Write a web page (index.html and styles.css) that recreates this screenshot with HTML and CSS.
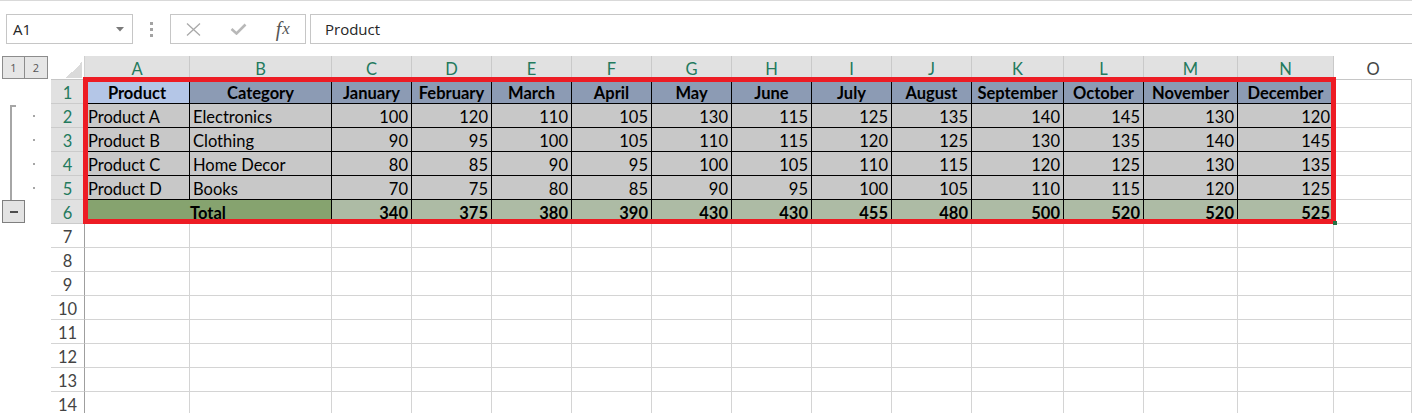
FILE: index.html
```html
<!DOCTYPE html>
<html lang="en">
<head>
<meta charset="utf-8">
<title>Sales sheet</title>
<link rel="stylesheet" href="styles.css">
</head>
<body>
<div class="app">
  <div class="formula-bar">
    <div class="namebox">
      <span class="namebox-text">A1</span>
      <svg class="caret" width="8" height="5" viewBox="0 0 8 5"><path d="M0 0 L8 0 L4 4.5 Z" fill="#7a7a7a"/></svg>
    </div>
    <div class="grip"><span></span><span></span><span></span></div>
    <div class="fx-box">
      <span class="fx-slot">
        <svg width="15" height="13" viewBox="0 0 15 13"><path d="M1 0.5 L14 12.5 M14 0.5 L1 12.5" stroke="#a9a9a9" stroke-width="1.3" fill="none"/></svg>
      </span>
      <span class="fx-slot">
        <svg width="17" height="12" viewBox="0 0 17 12"><path d="M1.5 6 L6.5 10.5 L15.5 1.5" stroke="#b8b8b8" stroke-width="2.6" fill="none"/></svg>
      </span>
      <span class="fx-slot fx-label"><i>f</i><i class="x">x</i></span>
    </div>
    <div class="formula-input">Product</div>
  </div>

  <div class="workspace">
    <div class="gutter">
      <div class="levels"><span class="lvl">1</span><span class="lvl">2</span></div>
      <div class="group">
        <div class="bracket"></div>
        <div class="dots"><span></span><span></span><span></span><span></span></div>
      </div>
      <div class="collapse"><span></span></div>
    </div>

    <div class="grid">
      <!-- header row -->
      <div class="corner"><span class="tri"></span></div>
      <div class="hc">A</div><div class="hc">B</div><div class="hc">C</div><div class="hc">D</div><div class="hc">E</div><div class="hc">F</div><div class="hc">G</div><div class="hc">H</div><div class="hc">I</div><div class="hc">J</div><div class="hc">K</div><div class="hc">L</div><div class="hc">M</div><div class="hc">N</div><div class="hc off">O</div>

      <!-- row 1 -->
      <div class="rh">1</div>
      <div class="t h active">Product</div><div class="t h">Category</div><div class="t h">January</div><div class="t h">February</div><div class="t h">March</div><div class="t h">April</div><div class="t h">May</div><div class="t h">June</div><div class="t h">July</div><div class="t h">August</div><div class="t h">September</div><div class="t h">October</div><div class="t h">November</div><div class="t h">December</div><div class="c"></div>

      <!-- row 2 -->
      <div class="rh">2</div>
      <div class="t">Product A</div><div class="t">Electronics</div><div class="t n">100</div><div class="t n">120</div><div class="t n">110</div><div class="t n">105</div><div class="t n">130</div><div class="t n">115</div><div class="t n">125</div><div class="t n">135</div><div class="t n">140</div><div class="t n">145</div><div class="t n">130</div><div class="t n">120</div><div class="c"></div>

      <!-- row 3 -->
      <div class="rh">3</div>
      <div class="t">Product B</div><div class="t">Clothing</div><div class="t n">90</div><div class="t n">95</div><div class="t n">100</div><div class="t n">105</div><div class="t n">110</div><div class="t n">115</div><div class="t n">120</div><div class="t n">125</div><div class="t n">130</div><div class="t n">135</div><div class="t n">140</div><div class="t n">145</div><div class="c"></div>

      <!-- row 4 -->
      <div class="rh">4</div>
      <div class="t">Product C</div><div class="t">Home Decor</div><div class="t n">80</div><div class="t n">85</div><div class="t n">90</div><div class="t n">95</div><div class="t n">100</div><div class="t n">105</div><div class="t n">110</div><div class="t n">115</div><div class="t n">120</div><div class="t n">125</div><div class="t n">130</div><div class="t n">135</div><div class="c"></div>

      <!-- row 5 -->
      <div class="rh">5</div>
      <div class="t">Product D</div><div class="t">Books</div><div class="t n">70</div><div class="t n">75</div><div class="t n">80</div><div class="t n">85</div><div class="t n">90</div><div class="t n">95</div><div class="t n">100</div><div class="t n">105</div><div class="t n">110</div><div class="t n">115</div><div class="t n">120</div><div class="t n">125</div><div class="c"></div>

      <!-- row 6 -->
      <div class="rh">6</div>
      <div class="t tot">Total</div><div class="t tn">340</div><div class="t tn">375</div><div class="t tn">380</div><div class="t tn">390</div><div class="t tn">430</div><div class="t tn">430</div><div class="t tn">455</div><div class="t tn">480</div><div class="t tn">500</div><div class="t tn">520</div><div class="t tn">520</div><div class="t tn">525</div><div class="c"></div>

      <!-- rows 7-14 -->
      <div class="rh off">7</div><div class="c"></div><div class="c"></div><div class="c"></div><div class="c"></div><div class="c"></div><div class="c"></div><div class="c"></div><div class="c"></div><div class="c"></div><div class="c"></div><div class="c"></div><div class="c"></div><div class="c"></div><div class="c"></div><div class="c"></div>
      <div class="rh off">8</div><div class="c"></div><div class="c"></div><div class="c"></div><div class="c"></div><div class="c"></div><div class="c"></div><div class="c"></div><div class="c"></div><div class="c"></div><div class="c"></div><div class="c"></div><div class="c"></div><div class="c"></div><div class="c"></div><div class="c"></div>
      <div class="rh off">9</div><div class="c"></div><div class="c"></div><div class="c"></div><div class="c"></div><div class="c"></div><div class="c"></div><div class="c"></div><div class="c"></div><div class="c"></div><div class="c"></div><div class="c"></div><div class="c"></div><div class="c"></div><div class="c"></div><div class="c"></div>
      <div class="rh off">10</div><div class="c"></div><div class="c"></div><div class="c"></div><div class="c"></div><div class="c"></div><div class="c"></div><div class="c"></div><div class="c"></div><div class="c"></div><div class="c"></div><div class="c"></div><div class="c"></div><div class="c"></div><div class="c"></div><div class="c"></div>
      <div class="rh off">11</div><div class="c"></div><div class="c"></div><div class="c"></div><div class="c"></div><div class="c"></div><div class="c"></div><div class="c"></div><div class="c"></div><div class="c"></div><div class="c"></div><div class="c"></div><div class="c"></div><div class="c"></div><div class="c"></div><div class="c"></div>
      <div class="rh off">12</div><div class="c"></div><div class="c"></div><div class="c"></div><div class="c"></div><div class="c"></div><div class="c"></div><div class="c"></div><div class="c"></div><div class="c"></div><div class="c"></div><div class="c"></div><div class="c"></div><div class="c"></div><div class="c"></div><div class="c"></div>
      <div class="rh off">13</div><div class="c"></div><div class="c"></div><div class="c"></div><div class="c"></div><div class="c"></div><div class="c"></div><div class="c"></div><div class="c"></div><div class="c"></div><div class="c"></div><div class="c"></div><div class="c"></div><div class="c"></div><div class="c"></div><div class="c"></div>
      <div class="rh off">14</div><div class="c"></div><div class="c"></div><div class="c"></div><div class="c"></div><div class="c"></div><div class="c"></div><div class="c"></div><div class="c"></div><div class="c"></div><div class="c"></div><div class="c"></div><div class="c"></div><div class="c"></div><div class="c"></div><div class="c"></div>
    </div>

    <div class="selection"></div>
    <div class="fill-handle"></div>
  </div>
</div>
</body>
</html>
```

FILE: styles.css
```css
* { box-sizing: border-box; }

html, body {
  margin: 0;
  padding: 0;
  background: #ffffff;
  overflow: hidden;
}

.app {
  width: 1412px;
  height: 413px;
  overflow: hidden;
  font-family: Lato, "Liberation Sans", sans-serif;
}

/* ---------- formula bar ---------- */
.formula-bar {
  height: 56px;
  border-top: 1px solid #d9d9d9;
  padding: 13px 0 0 6px;
  display: flex;
  align-items: flex-start;
  font-family: "Open Sans", "Noto Sans", sans-serif;
  font-size: 15px;
  color: #262626;
}

.namebox {
  width: 127px;
  height: 30px;
  border: 1px solid #c6c6c6;
  display: flex;
  align-items: center;
  justify-content: space-between;
  padding: 0 8px 0 6px;
}

.namebox-text { line-height: 20px; }

.caret { display: block; margin-top: 1px; }

.grip {
  width: 37px;
  height: 30px;
  display: flex;
  flex-direction: column;
  align-items: flex-start;
  padding: 8px 0 0 17px;
  gap: 3px;
}

.grip span {
  width: 3px;
  height: 3px;
  background: #a3a3a3;
}

.fx-box {
  width: 136px;
  height: 30px;
  border: 1px solid #c6c6c6;
  display: flex;
  align-items: center;
}

.fx-slot {
  width: 45px;
  display: flex;
  justify-content: center;
  align-items: center;
}

.fx-slot svg { display: block; }

.fx-label {
  font-family: "Liberation Serif", "DejaVu Serif", serif;
  font-size: 20px;
  line-height: 20px;
  color: #555555;
  padding-bottom: 1px;
}

.fx-label .x { font-size: 17px; margin-left: 1px; }

.formula-input {
  flex: 1;
  height: 30px;
  margin-left: 4px;
  margin-right: -4px;
  border: 1px solid #c6c6c6;
  padding: 0 0 0 14px;
  display: flex;
  align-items: center;
  line-height: 20px;
}

/* ---------- workspace ---------- */
.workspace {
  position: relative;
  display: flex;
  align-items: flex-start;
}

/* outline gutter */
.gutter {
  width: 51px;
  flex: none;
  display: flex;
  flex-direction: column;
}

.levels {
  display: flex;
  margin-left: 2px;
  height: 24px;
}

.lvl {
  width: 23px;
  height: 23px;
  border: 1px solid #8c8c8c;
  background: #e6e6e6;
  font-family: "Open Sans", sans-serif;
  font-size: 11px;
  color: #555555;
  display: flex;
  align-items: center;
  justify-content: center;
}

.lvl + .lvl { border-left: none; width: 23px; }

.group {
  margin-top: 25px;
  height: 95px;
  display: flex;
}

.bracket {
  margin-left: 10px;
  width: 6px;
  height: 95px;
  border-left: 2px solid #a6a6a6;
  border-top: 2px solid #a6a6a6;
}

.dots {
  margin-left: 17px;
  padding-top: 10px;
  display: flex;
  flex-direction: column;
  gap: 22px;
}

.dots span {
  width: 2px;
  height: 2px;
  background: #a6a6a6;
}

.collapse {
  margin-left: 2px;
  width: 23px;
  height: 23px;
  border: 1px solid #7f7f7f;
  background: #e3e3e3;
  display: flex;
  align-items: center;
  justify-content: center;
}

.collapse span {
  width: 8px;
  height: 2px;
  background: #4d4d4d;
}

/* sheet grid */
.grid {
  flex: 1;
  display: grid;
  grid-template-columns: 34px 105px 142px repeat(8, 80px) 92px 80px 94px 96px 1fr;
  grid-auto-rows: 24px;
  font-size: 16.5px;
  color: #000000;
}

.grid > div {
  display: flex;
  align-items: flex-end;
  padding: 0 3px 0;
  line-height: 20px;
  white-space: nowrap;
  overflow: hidden;
}

.corner {
  background: #ffffff;
  border-right: 1px solid #d0d0d0;
  border-bottom: 1px solid #c6c6c6;
  justify-content: flex-end;
  padding: 0 2px 1px 0 !important;
}

.tri {
  width: 16px;
  height: 16px;
  background: linear-gradient(to bottom right, transparent 50%, #dadada 50%);
}

.hc {
  background: #e1e1e1;
  color: #237a5d;
  justify-content: center;
  border-right: 1px solid #c9c9c9;
  border-bottom: 1px solid #bdbdbd;
}

.hc.off {
  background: #ffffff;
  color: #444444;
  border-right: none;
  border-bottom: 1px solid #c6c6c6;
}

.rh {
  background: #e1e1e1;
  color: #237a5d;
  justify-content: center;
  border-right: 1px solid #9f9f9f;
  border-bottom: 1px solid #cbcbcb;
}

.rh.off {
  background: #ffffff;
  color: #444444;
  border-bottom: 1px solid #d4d4d4;
}

.c {
  border-right: 1px solid #d4d4d4;
  border-bottom: 1px solid #d4d4d4;
}

.t {
  background: #c8c8c8;
  border-right: 1px solid #000000;
  border-bottom: 1px solid #000000;
}

.h {
  background: #8c9bb4;
  font-weight: 700;
  justify-content: center;
}

.h.active { background: #b4c6e7; }

.n { justify-content: flex-end; }

.tot {
  grid-column: span 2;
  background: #86a36f;
  font-weight: 700;
  justify-content: center;
}

.tn {
  background: #adbba5;
  font-weight: 700;
  justify-content: flex-end;
}

/* selection overlay drawn above the cells */
.selection {
  position: absolute;
  left: 83px;
  top: 21px;
  width: 1253px;
  height: 147px;
  border: 5px solid #ed1c24;
  pointer-events: none;
}

.fill-handle {
  position: absolute;
  left: 1333px;
  top: 165px;
  width: 4px;
  height: 4px;
  background: #217346;
}
```
